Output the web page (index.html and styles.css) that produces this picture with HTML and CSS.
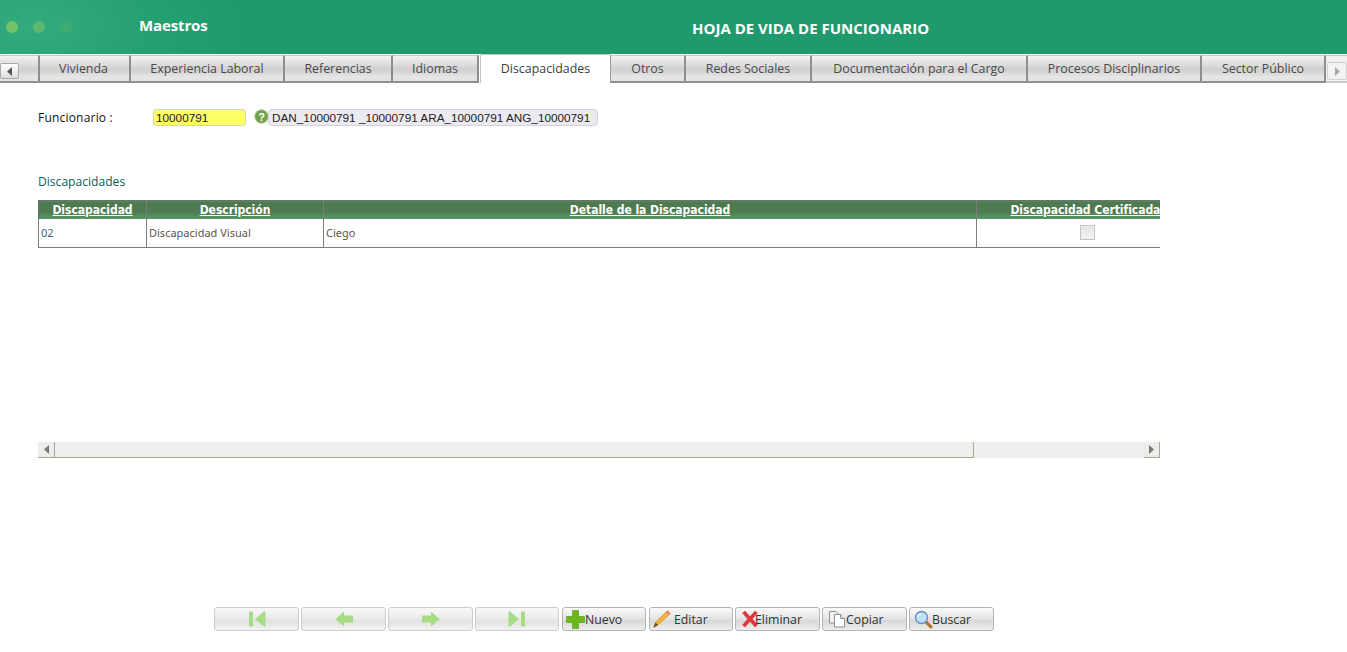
FILE: index.html
```html
<!DOCTYPE html>
<html lang="es">
<head>
<meta charset="utf-8">
<title>Hoja de vida de funcionario</title>
<link rel="stylesheet" href="styles.css">
</head>
<body>
<header class="top">
  <div class="dots"><i class="dot d1"></i><i class="dot d2"></i><i class="dot d3"></i></div>
  <div class="brand">Maestros</div>
  <div class="title">HOJA DE VIDA DE FUNCIONARIO</div>
</header>
<nav class="tabs">
  <div class="tab-arrow w-left"><span class="arrow-box"><svg width="7" height="9" viewBox="0 0 7 9"><path d="M6 0V9L1 4.5Z" fill="#555"/></svg></span></div>
  <a class="tab w1">Vivienda</a>
  <a class="tab w2">Experiencia Laboral</a>
  <a class="tab w3">Referencias</a>
  <a class="tab w4">Idiomas</a>
  <a class="tab active w5">Discapacidades</a>
  <a class="tab w6">Otros</a>
  <a class="tab w7">Redes Sociales</a>
  <a class="tab w8">Documentación para el Cargo</a>
  <a class="tab w9">Procesos Disciplinarios</a>
  <a class="tab w10">Sector Público</a>
  <div class="tab-arrow w-right"><span class="arrow-box"><svg width="7" height="9" viewBox="0 0 7 9"><path d="M1 0V9L6 4.5Z" fill="#aaa"/></svg></span></div>
</nav>
<main class="content">
  <div class="field-row">
    <label class="field-label">Funcionario :</label>
    <div class="code-input">10000791</div>
    <svg class="help" width="15" height="15" viewBox="0 0 15 15"><circle cx="7.5" cy="7.5" r="7" fill="#6fa04a"/><circle cx="7.5" cy="7.5" r="6.8" fill="none" stroke="#c6d8b8" stroke-width="1"/><text x="7.5" y="11.5" text-anchor="middle" class="help-q">?</text></svg>
    <div class="name-output">DAN_10000791 _10000791 ARA_10000791 ANG_10000791</div>
  </div>
  <h2 class="section">Discapacidades</h2>
  <div class="grid-wrap">
    <table class="grid">
      <colgroup><col class="c1"><col class="c2"><col class="c3"><col class="c4"></colgroup>
      <thead>
        <tr><th><a>Discapacidad</a></th><th><a>Descripción</a></th><th><a>Detalle de la Discapacidad</a></th><th><a>Discapacidad Certificada?</a></th></tr>
      </thead>
      <tbody>
        <tr><td class="code">02</td><td>Discapacidad Visual</td><td>Ciego</td><td class="center"><span class="check"></span></td></tr>
      </tbody>
    </table>
  </div>
  <div class="hscroll">
    <span class="sb-btn sb-left"><svg width="5" height="9" viewBox="0 0 5 9"><path d="M5 0V9L0 4.5Z" fill="#777"/></svg></span>
    <span class="sb-thumb"></span>
    <span class="sb-track"></span>
    <span class="sb-btn"><svg width="5" height="9" viewBox="0 0 5 9"><path d="M0 0V9L5 4.5Z" fill="#777"/></svg></span>
  </div>
  <div class="toolbar">
    <button class="btn b85" disabled><svg width="18" height="16" viewBox="0 0 18 16"><rect x="1" y="0.5" width="4" height="15" rx="1" fill="#a6dc83"/><path d="M7 8L16 0.5H17.500V15.500H16Z" fill="#a6dc83"/></svg></button>
    <button class="btn b85" disabled><svg width="18" height="16" viewBox="0 0 18 16"><path d="M0.500 8L9 0.500V4.500H18V11.500H9V15.500Z" fill="#a6dc83"/></svg></button>
    <button class="btn b85" disabled><svg width="18" height="16" viewBox="0 0 18 16"><path d="M17.500 8L9 0.500V4.500H0V11.500H9V15.500Z" fill="#a6dc83"/></svg></button>
    <button class="btn b84" disabled><svg width="18" height="16" viewBox="0 0 18 16"><rect x="13" y="0.5" width="4" height="15" rx="1" fill="#a6dc83"/><path d="M11 8L2 0.500H0.500V15.500H2Z" fill="#a6dc83"/></svg></button>
    <button class="btn b84 labeled new"><svg width="19" height="19" viewBox="0 0 19 19"><path d="M6.500 0.500H12.500V6.500H18.500V12.500H12.500V18.500H6.500V12.500H0.500V6.500H6.500Z" fill="#6cb81c" stroke="#4f9a10" stroke-width=".6"/></svg>Nuevo</button>
    <button class="btn b84 labeled edit"><svg width="20" height="20" viewBox="0 0 20 20"><path d="M15.500 1.500L18.500 4.500L6 16L1.500 18.500L3.500 13.500Z" fill="#f3b33d" stroke="#c9872a" stroke-width=".7"/><path d="M15.500 1.500L18.500 4.500L16.800 6.100L13.800 3.100Z" fill="#e88a80"/><path d="M1.500 18.500L3.500 13.500L6 16Z" fill="#6b4a2a"/></svg>Editar</button>
    <button class="btn b85 labeled del"><svg width="18" height="18" viewBox="0 0 18 18"><path d="M1.500 3L4 1L9 6.500L14 1L16.500 3L11.300 9L16.500 15L14 17L9 11.500L4 17L1.500 15L6.700 9Z" fill="#e0373c" stroke="#c12a2e" stroke-width=".4"/></svg>Eliminar</button>
    <button class="btn b85 labeled copy"><svg width="18" height="18" viewBox="0 0 18 18"><path d="M1.500 1.500H8L10 3.500V13H1.500Z" fill="#f2f2f2" stroke="#8d9096"/><path d="M6.500 4.500H12.500L16.500 8.500V17H6.500Z" fill="#fff" stroke="#8d9096"/><path d="M12.500 4.500V8.500H16.500" fill="#e6e6e6" stroke="#8d9096"/></svg>Copiar</button>
    <button class="btn b85 labeled find"><svg width="19" height="19" viewBox="0 0 19 19"><path d="M11.500 11.500L17 17" stroke="#a9701f" stroke-width="3" stroke-linecap="round"/><circle cx="7.500" cy="7.500" r="6" fill="#bfe0f7" stroke="#5d8fc4" stroke-width="1.300"/><path d="M3.800 7A4 4 0 0 1 7 3.800" stroke="#fff" stroke-width="1.300" fill="none"/></svg>Buscar</button>
  </div>
</main>
</body>
</html>
```
FILE: styles.css
```css
* { box-sizing: border-box; }
html, body { margin: 0; height: 100%; }
body { background: #fff; color: #222; font-family: "Open Sans", "Liberation Sans", sans-serif; overflow: hidden; }

.top {
  height: 54px;
  display: flex;
  align-items: center;
  background: radial-gradient(ellipse 210px 110px at 30px 26px, #33ab7e 0%, #28a274 45%, #1e9a6c 100%);
  color: #fff;
  padding-left: 6px;
}
.dots { display: flex; gap: 15px; width: 133px; padding-bottom: 1px; }
.dot { width: 12px; height: 12px; border-radius: 50%; }
.d1 { background: #74c269; }
.d2 { background: #5cb96f; }
.d3 { background: #3fab70; }
.brand { font-weight: 700; font-size: 15px; width: 553px; padding-bottom: 4px; letter-spacing: -.13px; }
.title { font-weight: 700; font-size: 15px; padding-top: 2px; }

.tabs { display: flex; height: 29px; align-items: flex-end; }
.tab-arrow, .tab {
  height: 28px;
  background: linear-gradient(#f3f3f3 0%, #d6d6d6 45%, #cfcfcf 55%, #e6e6e6 85%, #e2e2e2 100%);
  border-bottom: 2px solid #8e8e8e;
  border-top: 1px solid #c9c9c9;
}
.tab {
  display: flex;
  align-items: center;
  justify-content: center;
  font-size: 12.4px;
  color: #4a4a4a;
  border-right: 2px solid #8e8e8e;
  padding-bottom: 1px;
}
.w-left { width: 40px; border-right: 2px solid #8e8e8e; padding-top: 7px; }
.w-right { width: 21px; padding-top: 6px; padding-left: 1px; background: #f1f1f1; border-bottom-color: #ccc; }
.arrow-box {
  display: flex; align-items: center; justify-content: center;
  width: 19px; height: 16px;
  background: linear-gradient(#fff, #ddd);
  border: 1px solid #a9a9a9; border-radius: 2px;
}
.w-right .arrow-box { border-color: #d2d2d2; width: 20px; height: 18px; background: #f3f3f3; }
.w1 { width: 91px; padding-right: 2px; }
.w2 { width: 154px; }
.w3 { width: 108px; }
.w4 { width: 86px; margin-right: 1px; }
.w5 { width: 131px; }
.w6 { width: 75px; }
.w7 { width: 126px; }
.w8 { width: 216px; }
.w9 { width: 174px; }
.w10 { width: 124px; }
.tab.active {
  height: 29px;
  background: #fff;
  border: 1px solid #c4c4c4;
  border-bottom: 0;
  border-right: 1px solid #9a9a9a;
  border-radius: 2px 2px 0 0;
  color: #3c3c3c;
}

.content { padding: 25px 0 0 38px; }
.field-row { display: flex; align-items: center; height: 18px; }
.field-label { width: 115px; font-size: 12px; color: #111; letter-spacing: .2px; }
.code-input {
  width: 93px; height: 17px;
  background: #ffff66;
  border: 1px solid #d5d5c0;
  border-radius: 3px;
  font: 11.75px/16px "Liberation Sans", sans-serif;
  color: #222;
  padding-left: 2px;
  margin-right: 8px;
}
.help { flex: none; margin-top: -1px; }
.help-q { font: 700 11px "Liberation Sans", sans-serif; fill: #fff; }
.name-output {
  width: 330px; height: 17px; margin-left: -1px;
  background: #eaeaf0;
  border: 1px solid #d2d2d8;
  border-radius: 4px;
  font: 11.75px/16px "Liberation Sans", sans-serif;
  color: #222;
  padding-left: 3px;
  white-space: nowrap;
}
.section {
  margin: 47px 0 0;
  font-size: 12.1px;
  font-weight: 400;
  line-height: 18px;
  color: #0f5f55;
}
.grid-wrap { width: 1122px; margin-top: 9px; overflow: hidden; height: 48px; }
.grid { border-collapse: collapse; table-layout: fixed; width: 1162px; }
.c1 { width: 108px; }
.c2 { width: 177px; }
.c3 { width: 653px; }
.c4 { width: 224px; }
.grid th {
  height: 18px;
  padding: 0;
  background: linear-gradient(#4e7a50 0%, #4e7a50 55%, #579a66 100%);
  border-top: 1px solid #6f6f6f;
  border-right: 1px solid #7d7d7d;
  font: 700 12px/16px "DejaVu Sans", "Liberation Sans", sans-serif;
  font-stretch: condensed;
  letter-spacing: -.04px;
  color: #fff;
  white-space: nowrap;
  text-align: center;
}
.grid th:first-child { border-left: 1px solid #6f6f6f; }
.grid th a { text-decoration: underline; }
.grid td {
  height: 29px;
  padding: 0 0 0 2px;
  border-right: 1px solid #7d7d7d;
  border-bottom: 1px solid #7d7d7d;
  font-size: 11px;
  color: #5f5355;
  font-family: "Noto Sans", sans-serif;
}
.grid td:first-child { border-left: 1px solid #7d7d7d; }
.grid td.code { color: #3a5d8a; }
.grid td.center { padding: 0 2px 0 0; text-align: center; }
.check {
  display: inline-block;
  width: 15px; height: 15px;
  background: linear-gradient(#e2e2e2, #f5f5f5);
  border: 1px solid #c4c4c4;
  box-shadow: inset 0 0 0 1px #eee;
  vertical-align: middle;
  margin-bottom: 1px;
}
.hscroll {
  display: flex;
  width: 1122px;
  height: 16px;
  margin-top: 194px;
  background: #efefef;
}
.sb-btn {
  flex: none;
  width: 16px; height: 16px;
  display: flex; align-items: center; justify-content: center;
  background: #ececec;
  border-right: 1px solid #9fae8c;
  border-bottom: 1px solid #9fae8c;
}
.sb-left { width: 17px; }
.sb-thumb { width: 919px; height: 16px; background: #eee; border-right: 1px solid #9fae8c; border-bottom: 1px solid #9fae8c; }
.sb-track { flex: 1; }
.toolbar { display: flex; height: 24px; margin: 149px 0 0 176px; gap: 2px; }
.btn {
  display: flex;
  align-items: center;
  justify-content: center;
  height: 24px;
  padding: 0;
  background: linear-gradient(#fafafa 0%, #e6e6e6 45%, #d9d9d9 60%, #eeeeee 100%);
  border: 1px solid #b4b4b4;
  border-radius: 3px;
  font: 12.3px "Open Sans", sans-serif;
  color: #333;
}
.btn[disabled] { background: linear-gradient(#f8f8f8 0%, #ececec 45%, #e2e2e2 60%, #f3f3f3 100%); border-color: #cdcdcd; }
.b85 { width: 85px; }
.b84 { width: 84px; }
.labeled { justify-content: flex-start; }
.labeled svg { flex: none; }
.new { margin-left: 1px; padding-left: 3px; }
.edit { margin-left: 1px; padding-left: 2px; }
.edit svg { margin-right: 2px; }
.del { padding-left: 5px; }
.del svg { margin-right: -4px; }
.copy { padding-left: 5px; }
.copy svg { margin-right: 0; }
.find { padding-left: 4px; }
.find svg { margin-right: -1px; }
```
